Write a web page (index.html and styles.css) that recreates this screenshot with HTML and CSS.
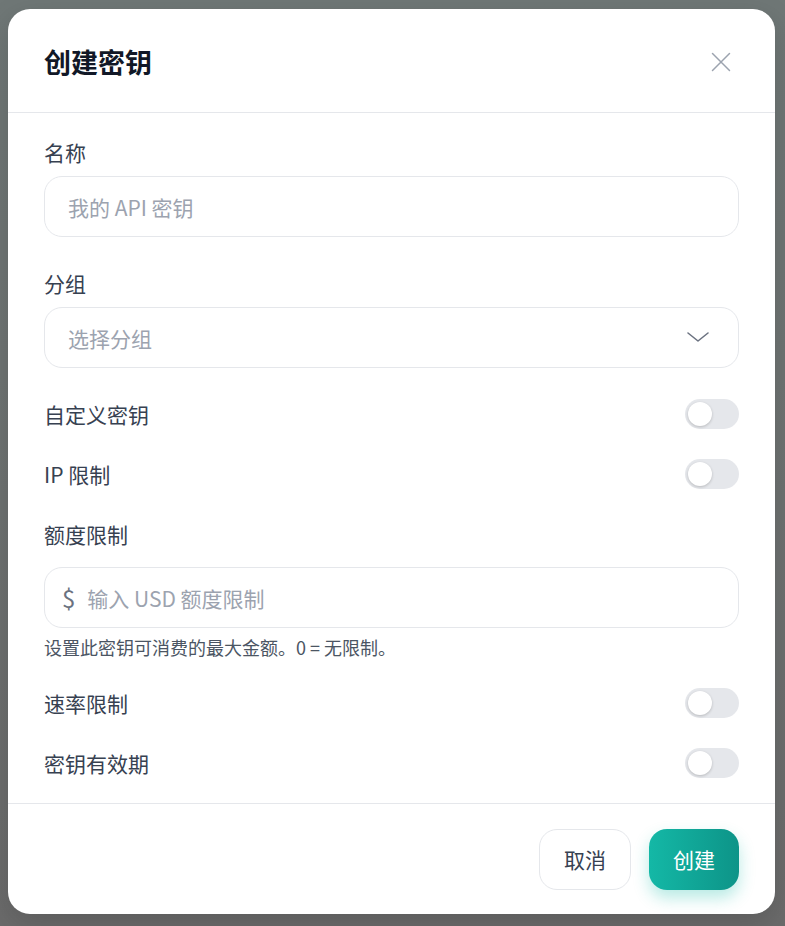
FILE: index.html
```html
<!DOCTYPE html>
<html lang="zh-CN">

<head>
    <meta charset="UTF-8">
    <meta name="viewport" content="width=device-width, initial-scale=1.0">
    <title>创建密钥</title>
    <link rel="stylesheet" href="styles.css">
</head>

<body>
    <div class="backdrop">
        <div class="dialog">
            <div class="dialog-header">
                <h2>创建密钥</h2>
                <button class="close-btn" aria-label="关闭">
                    <svg width="24" height="24" viewBox="0 0 24 24" fill="none" stroke="currentColor" stroke-width="1.5" stroke-linecap="round">
                        <path d="M3.5 3.5l17 17M20.5 3.5l-17 17" />
                    </svg>
                </button>
            </div>

            <div class="dialog-body">
                <div class="field">
                    <label>名称</label>
                    <input class="input" type="text" placeholder="我的 API 密钥">
                </div>

                <div class="field">
                    <label>分组</label>
                    <div class="select">
                        <span>选择分组</span>
                        <svg width="24" height="24" viewBox="0 0 24 24" fill="none" stroke="currentColor" stroke-width="1.6" stroke-linecap="round" stroke-linejoin="round">
                            <path d="M2 7l10 8 10-8" />
                        </svg>
                    </div>
                </div>

                <div class="switch-row">
                    <span>自定义密钥</span>
                    <span class="switch"><span class="knob"></span></span>
                </div>

                <div class="switch-row">
                    <span>IP 限制</span>
                    <span class="switch"><span class="knob"></span></span>
                </div>

                <div class="field">
                    <label class="label-wide">额度限制</label>
                    <div class="input money">
                        <span class="dollar">$</span>
                        <span class="ph">输入 USD 额度限制</span>
                    </div>
                    <p class="hint">设置此密钥可消费的最大金额。0 = 无限制。</p>
                </div>

                <div class="switch-row">
                    <span>速率限制</span>
                    <span class="switch"><span class="knob"></span></span>
                </div>

                <div class="switch-row">
                    <span>密钥有效期</span>
                    <span class="switch"><span class="knob"></span></span>
                </div>
            </div>

            <div class="dialog-footer">
                <button class="btn btn-cancel">取消</button>
                <button class="btn btn-primary">创建</button>
            </div>
        </div>
    </div>
</body>

</html>
```

FILE: styles.css
```css
* {
    box-sizing: border-box;
}

body {
    margin: 0;
    font-family: "Noto Sans CJK SC", "Noto Sans", sans-serif;
    background: linear-gradient(180deg, #6f7776 0%, #6f7473 40%, #6b6b6b 100%);
    min-height: 926px;
}

.backdrop {
    padding: 9px 10px 12px 8px;
}

.dialog {
    width: 767px;
    height: 905px;
    background: #fff;
    border-radius: 22px;
    box-shadow: 0 10px 30px rgba(0, 0, 0, 0.15);
    display: flex;
    flex-direction: column;
    overflow: hidden;
}

.dialog-header {
    height: 104px;
    padding: 2px 36px 0;
    display: flex;
    align-items: center;
    justify-content: space-between;
    border-bottom: 1px solid #e5e7eb;
}

.dialog-header h2 {
    margin: 0;
    font-size: 27px;
    font-weight: 700;
    color: #111827;
}

.close-btn {
    border: none;
    background: none;
    padding: 0;
    margin-right: 6px;
    color: #9ca3af;
    display: flex;
    cursor: pointer;
}

.dialog-body {
    flex: 1;
    padding: 25px 36px 24px;
    display: flex;
    flex-direction: column;
    gap: 32px;
}

.field {
    display: flex;
    flex-direction: column;
}

.field label {
    font-size: 21px;
    line-height: 28px;
    color: #374151;
    margin-bottom: 10px;
}

.field .label-wide {
    margin-bottom: 19px;
}

.input {
    height: 61px;
    border: 1px solid #e5e7eb;
    border-radius: 18px;
    padding: 0 23px;
    font-family: inherit;
    font-size: 21px;
    color: #111827;
    outline: none;
    background: #fff;
}

.input::placeholder {
    color: #9ca3af;
}

.select {
    height: 61px;
    border: 1px solid #e5e7eb;
    border-radius: 18px;
    padding: 0 28px 0 23px;
    display: flex;
    align-items: center;
    justify-content: space-between;
    font-size: 21px;
    color: #9ca3af;
}

.select svg {
    color: #6b7280;
}

.money {
    display: flex;
    align-items: center;
    padding-left: 17px;
}

.dollar {
    color: #6b7280;
    font-size: 24px;
    margin-right: 12px;
}

.ph {
    color: #9ca3af;
}

.hint {
    margin: 9px 0 0;
    font-size: 18px;
    line-height: 20px;
    color: #4b5563;
}

.switch-row {
    height: 28px;
    display: flex;
    align-items: center;
    justify-content: space-between;
    font-size: 21px;
    color: #374151;
}

.switch {
    width: 54px;
    height: 30px;
    border-radius: 15px;
    background: #e5e7eb;
    padding: 3px;
    display: flex;
}

.knob {
    width: 24px;
    height: 24px;
    border-radius: 50%;
    background: #fff;
    box-shadow: 0 1px 3px rgba(0, 0, 0, 0.2);
}

.dialog-footer {
    height: 111px;
    border-top: 1px solid #e5e7eb;
    padding: 0 36px;
    display: flex;
    align-items: center;
    justify-content: flex-end;
    gap: 18px;
}

.btn {
    height: 61px;
    padding: 0 24px;
    border-radius: 18px;
    font-family: inherit;
    font-size: 21px;
    cursor: pointer;
}

.btn-cancel {
    background: #fff;
    border: 1px solid #e5e7eb;
    color: #374151;
}

.btn-primary {
    border: none;
    color: #fff;
    background: linear-gradient(90deg, #14b8a6, #0d9488);
    box-shadow: 0 8px 16px rgba(20, 184, 166, 0.3);
}
```
